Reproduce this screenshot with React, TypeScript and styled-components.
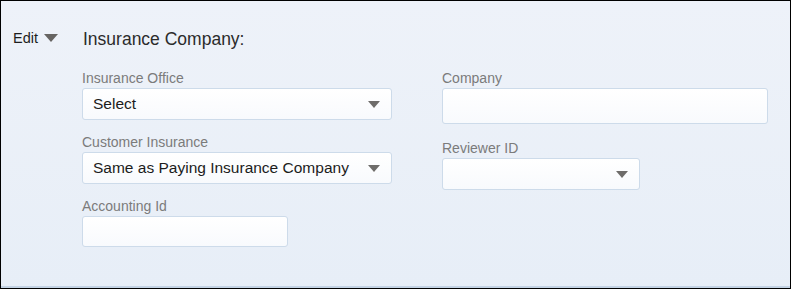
import React from "react";
import styled, { createGlobalStyle } from "styled-components";

const GlobalStyle = createGlobalStyle`
  html, body {
    margin: 0;
    padding: 0;
    background: #ffffff;
  }
  * {
    box-sizing: border-box;
  }
`;

interface FieldData {
  label: string;
  kind: "select" | "input";
  value?: string;
  width: number;
  height: number;
}

const leftFields: FieldData[] = [
  { label: "Insurance Office", kind: "select", value: "Select", width: 310, height: 32 },
  { label: "Customer Insurance", kind: "select", value: "Same as Paying Insurance Company", width: 310, height: 32 },
  { label: "Accounting Id", kind: "input", width: 206, height: 31 },
];

const rightFields: FieldData[] = [
  { label: "Company", kind: "input", width: 326, height: 36 },
  { label: "Reviewer ID", kind: "select", width: 198, height: 32 },
];

const Field: React.FC<{ data: FieldData }> = ({ data }) => (
  <FieldWrap>
    <Label>{data.label}</Label>
    <Box $w={data.width} $h={data.height}>
      <BoxText>{data.value}</BoxText>
      {data.kind === "select" && <Caret />}
    </Box>
  </FieldWrap>
);

export default function App() {
  return (
    <>
      <GlobalStyle />
      <Frame>
        <EditMenu>
          <EditLabel>Edit</EditLabel>
          <EditCaret />
        </EditMenu>
        <Main>
          <Title>Insurance Company:</Title>
          <Columns>
            <Column $gap={14}>
              {leftFields.map((f) => (
                <Field key={f.label} data={f} />
              ))}
            </Column>
            <Column $gap={16}>
              {rightFields.map((f) => (
                <Field key={f.label} data={f} />
              ))}
            </Column>
          </Columns>
        </Main>
      </Frame>
    </>
  );
}

const Frame = styled.div`
  width: 791px;
  height: 289px;
  border: 1px solid #000;
  background: linear-gradient(to bottom, #eef2f9 0%, #e7eef7 100%);
  box-shadow: inset 0 -2px 0 #c4d3e4;
  display: flex;
  padding: 28px 0 0 12px;
  font-family: "Liberation Sans", Arial, sans-serif;
`;

const EditMenu = styled.div`
  width: 69px;
  height: 16px;
  display: flex;
  align-items: center;
  flex-shrink: 0;
  margin-top: 1px;
  cursor: pointer;
`;

const EditLabel = styled.span`
  font-size: 14.5px;
  line-height: 16px;
  color: #1e1e1e;
`;

const EditCaret = styled.span`
  width: 0;
  height: 0;
  margin-left: 6px;
  border-left: 7.5px solid transparent;
  border-right: 7.5px solid transparent;
  border-top: 8px solid #666462;
`;

const Main = styled.div`
  display: flex;
  flex-direction: column;
`;

const Title = styled.h2`
  margin: 0 0 21px 1px;
  font-size: 17.5px;
  line-height: 20px;
  font-weight: normal;
  color: #2b2b2b;
`;

const Columns = styled.div`
  display: flex;
  gap: 50px;
  align-items: flex-start;
`;

const Column = styled.div<{ $gap: number }>`
  width: 310px;
  display: flex;
  flex-direction: column;
  gap: ${(p) => p.$gap}px;

  &:last-child {
    width: 326px;
  }
`;

const FieldWrap = styled.div`
  display: flex;
  flex-direction: column;
  gap: 2px;
`;

const Label = styled.label`
  font-size: 14px;
  line-height: 16px;
  color: #7b7b7b;
`;

const Box = styled.div<{ $w: number; $h: number }>`
  width: ${(p) => p.$w}px;
  height: ${(p) => p.$h}px;
  background: linear-gradient(to bottom, #ffffff 0%, #f8fafd 100%);
  border: 1px solid #cddbea;
  border-radius: 3px;
  display: flex;
  align-items: center;
  padding: 0 11px 0 10px;
`;

const BoxText = styled.span`
  flex: 1;
  font-size: 15.5px;
  color: #1c1c1c;
  white-space: nowrap;
  overflow: hidden;
`;

const Caret = styled.span`
  width: 0;
  height: 0;
  border-left: 6px solid transparent;
  border-right: 6px solid transparent;
  border-top: 7px solid #6e6c6a;
`;
